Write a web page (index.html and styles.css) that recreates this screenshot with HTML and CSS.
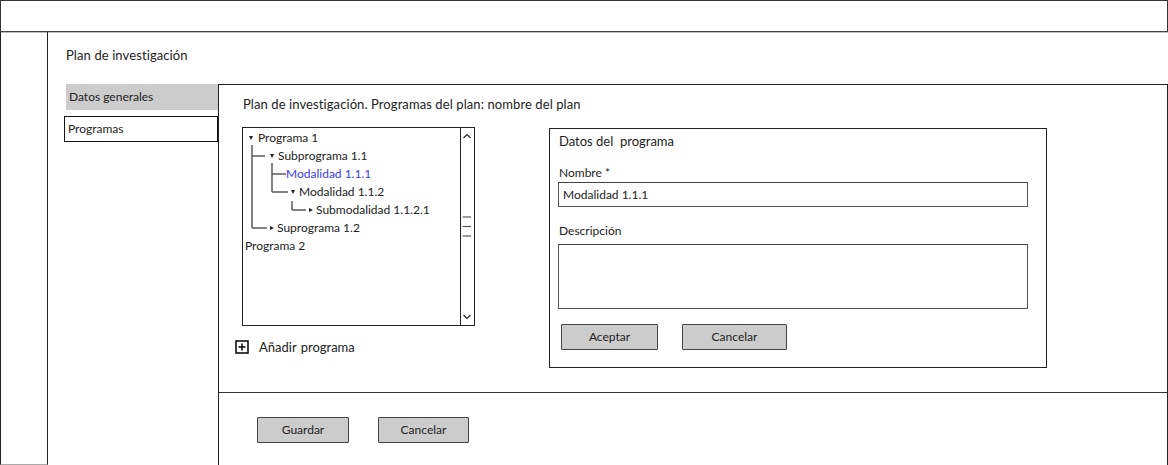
FILE: index.html
```html
<!DOCTYPE html>
<html lang="es">
<head>
<meta charset="utf-8">
<title>Plan de investigación</title>
<link rel="stylesheet" href="styles.css">
</head>
<body>
<div class="topbar"></div>
<div class="page">
  <div class="sidebar"></div>
  <div class="main">
    <div class="heading">Plan de investigación</div>
    <div class="workarea">
      <div class="tabs">
        <div class="tab tab-active">Datos generales</div>
        <div class="tab tab-outline">Programas</div>
      </div>
      <div class="content">
        <div class="upper">
          <div class="title">Plan de investigación. Programas del plan: nombre del plan</div>
          <div class="row">
            <div class="treecol">
              <div class="treebox">
                <div class="tree">
                  <svg class="connectors" width="217" height="197" viewBox="0 0 217 197">
                    <g stroke="#5a5a5a" stroke-width="1.5" fill="none">
                      <line x1="9" y1="17" x2="9" y2="100"/>
                      <line x1="9" y1="28" x2="22" y2="28"/>
                      <line x1="9" y1="100" x2="24" y2="100"/>
                      <line x1="29" y1="35" x2="29" y2="64"/>
                      <line x1="29" y1="46" x2="43" y2="46"/>
                      <line x1="29" y1="64" x2="45" y2="64"/>
                      <line x1="49" y1="73" x2="49" y2="82"/>
                      <line x1="49" y1="82" x2="63" y2="82"/>
                    </g>
                  </svg>
                  <div class="node lv0"><span class="tri-down"></span>Programa 1</div>
                  <div class="node lv1"><span class="tri-down"></span>Subprograma 1.1</div>
                  <div class="node lv2 selected">Modalidad 1.1.1</div>
                  <div class="node lv2b"><span class="tri-down"></span>Modalidad 1.1.2</div>
                  <div class="node lv3"><span class="tri-right"></span>Submodalidad 1.1.2.1</div>
                  <div class="node lv1b"><span class="tri-right"></span>Suprograma 1.2</div>
                  <div class="node lv0b">Programa 2</div>
                </div>
                <div class="scrollbar">
                  <svg width="13" height="197" viewBox="0 0 13 197">
                    <g stroke="#222" stroke-width="1.2" fill="none">
                      <polyline points="2.5,10 6,6.5 9.5,10"/>
                      <polyline points="2.5,187 6,190.5 9.5,187"/>
                    </g>
                    <g stroke="#555" stroke-width="1.2">
                      <line x1="1.5" y1="89" x2="10" y2="89"/>
                      <line x1="1.5" y1="98.5" x2="10" y2="98.5"/>
                      <line x1="1.5" y1="108" x2="10" y2="108"/>
                    </g>
                  </svg>
                </div>
              </div>
              <div class="addrow">
                <svg class="plus" width="14" height="14" viewBox="0 0 14 14">
                  <rect x="1" y="1" width="12" height="12" fill="#fff" stroke="#111" stroke-width="1.6"/>
                  <line x1="7" y1="3.5" x2="7" y2="10.5" stroke="#111" stroke-width="1.6"/>
                  <line x1="3.5" y1="7" x2="10.5" y2="7" stroke="#111" stroke-width="1.6"/>
                </svg>
                <span class="addtext">Añadir programa</span>
              </div>
            </div>
            <div class="panel">
              <div class="panel-title">Datos del&nbsp; programa</div>
              <div class="label">Nombre *</div>
              <div class="input">Modalidad 1.1.1</div>
              <div class="label label-desc">Descripción</div>
              <div class="textarea"></div>
              <div class="buttons">
                <div class="btn btn-accept">Aceptar</div>
                <div class="btn btn-cancel">Cancelar</div>
              </div>
            </div>
          </div>
        </div>
        <div class="lower">
          <div class="btn btn-save">Guardar</div>
          <div class="btn btn-cancel2">Cancelar</div>
        </div>
      </div>
    </div>
  </div>
</div>
</body>
</html>
```
FILE: styles.css
```css
* { box-sizing: border-box; }
html, body {
  margin: 0;
  padding: 0;
  width: 1168px;
  height: 465px;
  overflow: hidden;
  background: #fff;
  font-family: Lato, "Open Sans", "Liberation Sans", sans-serif;
  color: #222;
}
.topbar {
  width: 1168px;
  height: 32px;
  border: 1px solid #333;
  border-bottom-color: #444;
  box-shadow: 0 1px 0 #bbb;
}
.page {
  display: flex;
  height: 433px;
}
.sidebar {
  width: 48px;
  height: 433px;
  border-left: 1px solid #222;
  border-right: 1px solid #222;
  border-bottom: 1px solid #aaa;
}
.main {
  flex: 1;
  display: flex;
  flex-direction: column;
}
.heading {
  font-size: 13px;
  line-height: 16px;
  margin-top: 15px;
  padding-left: 18px;
  height: 16px;
  letter-spacing: 0.1px;
}
.workarea {
  display: flex;
  margin-top: 21px;
  flex: 1;
}
.tabs {
  width: 170px;
  padding-left: 16px;
  display: flex;
  flex-direction: column;
  flex-shrink: 0;
}
.tab {
  font-size: 12px;
  height: 26px;
  line-height: 26px;
}
.tab-active {
  background: #cccccc;
  margin-left: 2px;
  padding-left: 3px;
}
.tab-outline {
  margin-top: 6px;
  border: 1px solid #111;
  padding-left: 3px;
  line-height: 24px;
}
.content {
  flex: 1;
  border: 1px solid #222;
  border-bottom: none;
  display: flex;
  flex-direction: column;
}
.upper {
  height: 308px;
  border-bottom: 1px solid #333;
  padding-left: 23px;
}
.title {
  font-size: 13px;
  line-height: 16px;
  margin-top: 11px;
  padding-left: 1px;
  letter-spacing: 0.09px;
}
.row {
  display: flex;
  margin-top: 15px;
}
.treecol {
  width: 233px;
  flex-shrink: 0;
}
.treebox {
  width: 233px;
  height: 199px;
  border: 1px solid #222;
  display: flex;
}
.tree {
  position: relative;
  width: 217px;
  padding-top: 1px;
}
.connectors {
  position: absolute;
  left: 0;
  top: 0;
}
.node {
  font-size: 12px;
  line-height: 18px;
  height: 18px;
  white-space: nowrap;
  display: flex;
  align-items: center;
}
.lv0 { padding-left: 6px; }
.lv1 { padding-left: 27px; }
.lv2 { padding-left: 43px; }
.lv2b { padding-left: 48px; }
.lv3 { padding-left: 66px; }
.lv1b { padding-left: 27px; }
.lv0b { padding-left: 2px; }
.selected { color: #3a3ae8; }
.tri-down {
  display: inline-block;
  width: 0;
  height: 0;
  border-left: 2px solid transparent;
  border-right: 2px solid transparent;
  border-top: 4px solid #222;
  margin-right: 4px;
}
.tri-right {
  display: inline-block;
  width: 0;
  height: 0;
  border-top: 2px solid transparent;
  border-bottom: 2px solid transparent;
  border-left: 4px solid #222;
  margin-right: 3px;
}
.lv0 .tri-down { margin-right: 5px; }
.scrollbar {
  width: 14px;
  border-left: 1px solid #222;
}
.scrollbar svg { display: block; }
.addrow {
  display: flex;
  align-items: center;
  margin-top: 14px;
  margin-left: -7px;
  height: 14px;
}
.plus { display: block; flex-shrink: 0; }
.addtext {
  font-size: 13px;
  margin-left: 10px;
  line-height: 14px;
  word-spacing: 1px;
}
.panel {
  margin-left: 74px;
  margin-top: 1px;
  width: 498px;
  height: 240px;
  border: 1px solid #222;
  padding-left: 8px;
}
.panel-title {
  font-size: 13px;
  line-height: 16px;
  margin-top: 4px;
  padding-left: 1px;
}
.label {
  font-size: 12px;
  line-height: 15px;
  margin-top: 16px;
  padding-left: 1px;
}
.label-desc { margin-top: 16px; }
.input {
  margin-top: 2px;
  width: 470px;
  height: 25px;
  border: 1px solid #555;
  border-top-color: #444;
  font-size: 12px;
  line-height: 23px;
  padding-left: 4px;
}
.textarea {
  margin-top: 6px;
  width: 470px;
  height: 65px;
  border: 1px solid #555;
  border-top-color: #444;
}
.buttons {
  display: flex;
  margin-top: 15px;
  padding-left: 3px;
}
.btn {
  height: 26px;
  background: #cccccc;
  border: 1px solid #444;
  border-radius: 1px;
  font-size: 12px;
  line-height: 24px;
  text-align: center;
  color: #222;
}
.btn-accept { width: 97px; }
.btn-cancel { width: 105px; margin-left: 24px; }
.lower {
  display: flex;
  padding-left: 38px;
  padding-top: 24px;
}
.btn-save { width: 92px; }
.btn-cancel2 { width: 91px; margin-left: 29px; }
```
